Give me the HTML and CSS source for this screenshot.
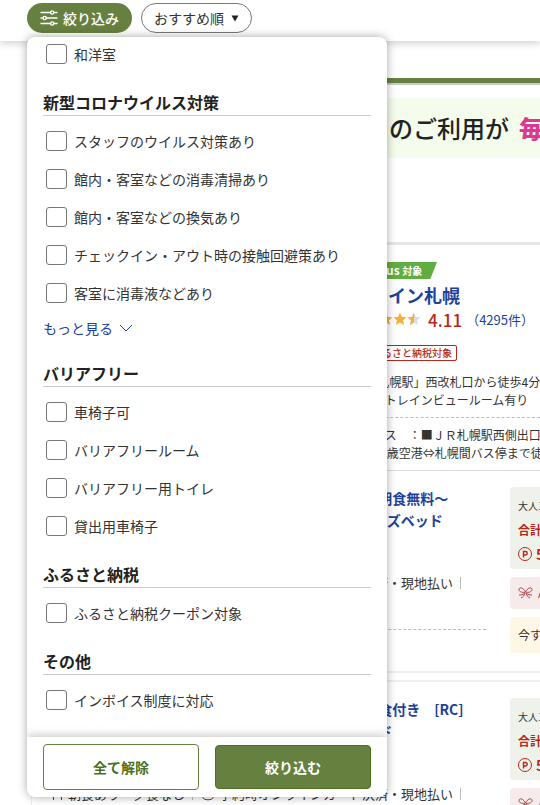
FILE: index.html
```
<!DOCTYPE html>
<html lang="ja">
<head>
    <meta charset="UTF-8">
    <meta name="viewport" content="width=device-width, initial-scale=1.0">
    <title>宿泊プラン検索</title>
    <link rel="stylesheet" href="styles.css">
</head>
<body>

<header>
    <button type="button" class="filter-btn">
        <svg width="18" height="16" viewBox="0 0 18 16" fill="none" stroke="#fff" stroke-width="1.4" stroke-linecap="round">
            <path d="M1 2.5h9.5M14 2.5h3M1 8h2M6.500 8H17M1 13.500h9.500M14 13.500h3"/>
            <circle cx="12.200" cy="2.500" r="1.600"/>
            <circle cx="4.700" cy="8" r="1.600"/>
            <circle cx="12.200" cy="13.500" r="1.600"/>
        </svg>
        絞り込み
    </button>
    <div class="sort">
        <select aria-label="並び順">
            <option>おすすめ順</option>
        </select>
        <svg class="sort-arrow" width="8" height="7" viewBox="0 0 8 7"><path d="M0.500 0.500h7L4 6.500z" fill="#222"/></svg>
    </div>
</header>

<form class="filter-panel">
    <div class="filter-body">
        <div class="items first">
            <label class="item"><input type="checkbox">和洋室</label>
        </div>

        <h2>新型コロナウイルス対策</h2>
        <div class="items">
            <label class="item"><input type="checkbox">スタッフのウイルス対策あり</label>
            <label class="item"><input type="checkbox">館内・客室などの消毒清掃あり</label>
            <label class="item"><input type="checkbox">館内・客室などの換気あり</label>
            <label class="item"><input type="checkbox">チェックイン・アウト時の接触回避策あり</label>
            <label class="item"><input type="checkbox">客室に消毒液などあり</label>
        </div>
        <a href="#" class="more">もっと見る
            <svg width="14" height="8" viewBox="0 0 14 8" fill="none" stroke="#1e429a" stroke-width="1"><path d="M1 1l6 6 6-6"/></svg>
        </a>

        <h2>バリアフリー</h2>
        <div class="items">
            <label class="item"><input type="checkbox">車椅子可</label>
            <label class="item"><input type="checkbox">バリアフリールーム</label>
            <label class="item"><input type="checkbox">バリアフリー用トイレ</label>
            <label class="item"><input type="checkbox">貸出用車椅子</label>
        </div>

        <h2>ふるさと納税</h2>
        <div class="items">
            <label class="item"><input type="checkbox">ふるさと納税クーポン対象</label>
        </div>

        <h2>その他</h2>
        <div class="items">
            <label class="item"><input type="checkbox">インボイス制度に対応</label>
        </div>
    </div>
    <div class="filter-footer">
        <button type="reset" class="clear-btn">全て解除</button>
        <button type="submit" class="submit-btn">絞り込む</button>
    </div>
</form>

<main>
    <div class="tab-line"></div>
    <div class="banner">のご利用が<strong>毎</strong></div>

    <section class="hotel">
        <div class="plus">us <span>対象</span></div>
        <h1><a href="#">Ｒイン札幌</a></h1>
        <div class="rating">
            <svg width="42" height="14" viewBox="0 0 42 14">
                <defs>
                    <path id="star" d="M7 0.600l1.900 4.300 4.600 0.400-3.500 3.100 1.100 4.600L7 10.600 2.900 13l1.100-4.600L0.500 5.300l4.600-0.400z"/>
                    <clipPath id="half"><rect width="7" height="14"/></clipPath>
                </defs>
                <use href="#star" fill="#f2b13c"/>
                <use href="#star" x="14" fill="#f2b13c"/>
                <use href="#star" x="28" fill="#ddd"/>
                <g transform="translate(28 0)"><use href="#star" fill="#f2b13c" clip-path="url(#half)"/></g>
            </svg>
            <b>4.11</b>
            <a href="#">（4295件）</a>
        </div>
        <span class="tax-tag">るさと納税対象</span>
        <p>R札幌駅」西改札口から徒歩4分<br>の トレインビュールーム有り</p>
        <p class="access">セ ス　：■ＪＲ札幌駅西側出口<br>/千歳空港⇔札幌間バス停まで徒</p>
    </section>

    <section class="plan">
        <div class="plan-info">
            <h3><a href="#">-朝食無料〜<br>ンズベッド</a></h3>
            <ul class="details">
                <li>
                    <svg width="14" height="14" viewBox="0 0 14 14" fill="none" stroke="#444"><path d="M3.500 1v12M1.500 1v4h4V1M11.500 13V1c-2 1-2.500 4-2 7h2"/></svg>
                    朝食あり・夕食なし
                </li>
                <li>
                    <svg width="14" height="14" viewBox="0 0 14 14" fill="none" stroke="#444"><ellipse cx="7" cy="3.500" rx="5" ry="2.500"/><path d="M2 3.500v7c0 3 10 3 10 0v-7M2 7c0 3 10 3 10 0"/></svg>
                    予約時オンラインカード決済・現地払い
                </li>
            </ul>
        </div>
        <div class="prices">
            <div class="total">
                <small>大人1名</small>
                <b>合計</b>
                <span class="points">
                    <svg width="14" height="14" viewBox="0 0 14 14" fill="none" stroke="#b5291c"><circle cx="7" cy="7" r="6.500"/><path d="M5.500 10.500v-6h2a1.700 1.700 0 0 1 0 3.500h-2" stroke-width="1.400"/></svg>
                    5
                </span>
            </div>
            <div class="gift">
                <svg width="15" height="14" viewBox="0 0 15 14" fill="none" stroke="#a8434a"><path d="M7.500 6C5 1 1 1 1 3.500S5 7 7.500 6zM7.500 6C10 1 14 1 14 3.500S10 7 7.500 6zM7 6.500C5 9 3 9 1 9M7 7c-1 3-2 4-4 5M8 6.500c2 2.500 4 2.500 6 2.500M8 7c1 3 2 4 4 5"/></svg>
                A
            </div>
            <div class="now">今すぐ</div>
        </div>
    </section>

    <section class="plan next">
        <div class="plan-info">
            <h3><a href="#">-食付き　[RC]<br>-ド</a></h3>
            <ul class="details">
                <li>
                    <svg width="14" height="14" viewBox="0 0 14 14" fill="none" stroke="#444"><path d="M3.500 1v12M1.500 1v4h4V1M11.500 13V1c-2 1-2.500 4-2 7h2"/></svg>
                    朝食あり・夕食なし
                </li>
                <li>
                    <svg width="14" height="14" viewBox="0 0 14 14" fill="none" stroke="#444"><ellipse cx="7" cy="3.500" rx="5" ry="2.500"/><path d="M2 3.500v7c0 3 10 3 10 0v-7M2 7c0 3 10 3 10 0"/></svg>
                    予約時オンラインカード決済・現地払い
                </li>
            </ul>
        </div>
        <div class="prices">
            <div class="total">
                <small>大人1名</small>
                <b>合計</b>
                <span class="points">
                    <svg width="14" height="14" viewBox="0 0 14 14" fill="none" stroke="#b5291c"><circle cx="7" cy="7" r="6.500"/><path d="M5.500 10.500v-6h2a1.700 1.700 0 0 1 0 3.500h-2" stroke-width="1.400"/></svg>
                    5
                </span>
            </div>
            <div class="gift">
                <svg width="15" height="14" viewBox="0 0 15 14" fill="none" stroke="#a8434a"><path d="M7.500 6C5 1 1 1 1 3.500S5 7 7.500 6zM7.500 6C10 1 14 1 14 3.500S10 7 7.500 6zM7 6.500C5 9 3 9 1 9M7 7c-1 3-2 4-4 5M8 6.500c2 2.500 4 2.500 6 2.500M8 7c1 3 2 4 4 5"/></svg>
                A
            </div>
        </div>
    </section>
</main>

</body>
</html>
```
FILE: styles.css
```
* {
    margin: 0;
    padding: 0;
    box-sizing: border-box;
}

/* the page behind does not scroll while the panel is open */
body {
    height: 100vh;
    overflow: hidden;
    background: #fff;
    color: #333;
    font-family: "Noto Sans CJK JP", sans-serif;
    font-size: 14px;
}

button, select, input {
    font-family: inherit;
    font-size: 14px;
}

a {
    color: #1e429a;
    text-decoration: none;
}

svg {
    flex-shrink: 0;
}

header {
    position: relative;
    display: flex;
    gap: 9px;
    height: 41px;
    padding: 3px 27px 8px;
    background: #fff;
    box-shadow: 0 2px 8px rgba(0, 0, 0, 0.2);
}

.filter-btn {
    display: flex;
    align-items: center;
    gap: 5px;
    padding: 0 13px;
    border: none;
    border-radius: 15px;
    background: #668040;
    color: #fff;
    font-weight: 500;
    cursor: pointer;
}

.sort {
    position: relative;
}

.sort select {
    appearance: none;
    width: 111px;
    height: 30px;
    padding: 0 12px;
    border: 1px solid #777;
    border-radius: 15px;
    background: #fff;
    color: #333;
}

.sort-arrow {
    position: absolute;
    top: 12px;
    right: 13px;
    pointer-events: none;
}

/* filter panel */
.filter-panel {
    position: absolute;
    z-index: 10;
    top: 37px;
    left: 27px;
    width: 360px;
    border-radius: 8px;
    background: #fff;
    box-shadow: 0 0 10px rgba(0, 0, 0, 0.35);
    overflow: hidden;
}

.filter-body {
    padding: 0 16px 18px;
}

.filter-body h2 {
    margin-top: 18px;
    padding-bottom: 2px;
    border-bottom: 1px solid #ccc;
    color: #222;
    font-size: 16px;
    line-height: 22px;
    font-weight: 700;
}

.items {
    padding: 6px 3px 0;
}

.items.first {
    margin-top: -2px;
    padding-top: 0;
}

.item {
    display: flex;
    align-items: center;
    gap: 7px;
    height: 38px;
}

.item input {
    appearance: none;
    width: 21px;
    height: 20px;
    border: 1px solid #777;
    border-radius: 3px;
    background: #fff;
}

.item input:checked {
    background: #668040;
}

.more {
    display: flex;
    align-items: center;
    gap: 6px;
    height: 32px;
}

.filter-footer {
    display: flex;
    align-items: center;
    gap: 16px;
    height: 60px;
    padding: 0 16px;
    box-shadow: 0 0 10px rgba(0, 0, 0, 0.3);
}

.filter-footer button {
    flex: 1;
    border-radius: 4px;
    font-weight: 700;
    cursor: pointer;
}

.clear-btn {
    height: 46px;
    border: 1px solid #668040;
    background: #fff;
    color: #4c7020;
}

.submit-btn {
    height: 44px;
    border: 1px solid #4c7020;
    background: #668040;
    color: #fff;
}

/* search results */
main {
    padding-top: 37px;
    padding-left: 31px;
    white-space: nowrap;
}

.tab-line {
    height: 7px;
    border-bottom: 2px solid #ccc;
    background: #668040;
}

.banner {
    height: 60px;
    margin-top: 13px;
    margin-bottom: 84px;
    padding-left: 358px;
    background: #f4fdec;
    color: #222;
    font-size: 24px;
    font-weight: 500;
    line-height: 60px;
    overflow: hidden;
}

.banner strong {
    margin-left: 10px;
    color: #dc3a90;
    font-weight: 900;
}

.hotel {
    padding: 17px 0 8px 339px;
    border-top: 3px solid #e6e6e6;
    border-bottom: 1px solid #ddd;
    overflow: hidden;
}

.plus {
    width: 67px;
    padding-left: 16px;
    background: #62ad41;
    clip-path: polygon(0 0, 100% 0, 90% 100%, 0 100%);
    color: #fff;
    font-size: 12px;
    font-weight: 700;
    line-height: 16px;
}

.plus span {
    font-size: 10px;
}

.hotel h1 {
    margin-top: 2px;
    font-size: 18px;
    font-weight: 700;
    line-height: 28px;
}

.rating {
    display: flex;
    align-items: center;
    height: 20px;
    padding-left: 9px;
}

.rating b {
    margin-left: 7px;
    color: #b5291c;
    font-size: 17px;
    font-weight: 500;
}

.rating a {
    margin-left: 4px;
    font-size: 13px;
}

.tax-tag {
    display: block;
    width: 87px;
    margin-top: 16px;
    padding-left: 11px;
    border: 1px solid #b5291c;
    border-radius: 2px;
    color: #b5291c;
    font-size: 10px;
    font-weight: 500;
    line-height: 14px;
}

.hotel p {
    margin-top: 8px;
    font-size: 12px;
    line-height: 18px;
}

.hotel .tax-tag + p {
    margin-top: 12px;
}

.hotel .access {
    padding-top: 8px;
    border-top: 1px dashed #bbb;
}

.plan {
    display: flex;
    gap: 24px;
    margin-bottom: 7px;
    padding: 16px 0 18px 19px;
    border-bottom: 2px solid #eee;
}

.plan.next {
    border-top: 2px solid #eee;
    border-left: 1px solid #eee;
    padding-left: 18px;
}

.plan-info {
    flex: 1;
    min-width: 0;
    align-self: flex-start;
    padding-bottom: 36px;
    border-bottom: 1px dashed #bbb;
}

.plan h3 {
    padding-left: 323px;
    font-size: 14px;
    font-weight: 700;
    line-height: 22px;
}

.details {
    display: flex;
    margin-top: 42px;
    list-style: none;
    font-size: 13px;
    line-height: 20px;
}

.details li {
    display: flex;
    align-items: center;
    gap: 4px;
}

.details li::after {
    content: "";
    width: 1px;
    height: 12px;
    margin: 0 8px 0 3px;
    background: #bbb;
}

.prices {
    display: flex;
    flex-direction: column;
    gap: 8px;
    width: 30px;
}

.prices > div {
    padding-left: 8px;
    border-radius: 4px 0 0 4px;
    overflow: hidden;
}

.total {
    display: flex;
    flex-direction: column;
    padding-top: 9px;
    padding-bottom: 5px;
    background: #eef2ea;
    color: #b5291c;
}

.total small {
    color: #333;
    font-size: 10px;
    line-height: 20px;
}

.total b {
    font-size: 12px;
    line-height: 28px;
}

.points {
    display: flex;
    align-items: center;
    gap: 4px;
    font-size: 14px;
    font-weight: 700;
    line-height: 20px;
}

.gift {
    display: flex;
    align-items: center;
    gap: 5px;
    background: #f6eaea;
    color: #a8434a;
    font-size: 12px;
    line-height: 32px;
}

.now {
    background: #fff7e6;
    font-size: 12px;
    line-height: 36px;
}
```
